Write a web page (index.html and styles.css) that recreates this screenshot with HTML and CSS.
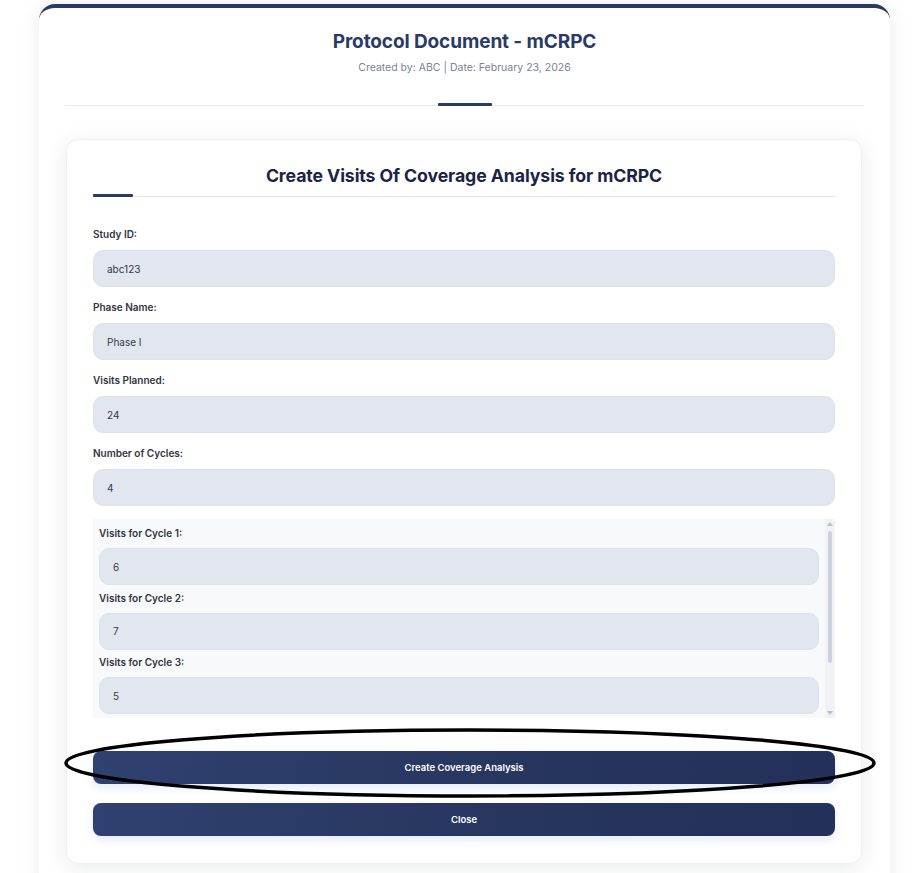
FILE: index.html
```html
<!DOCTYPE html>
<html lang="en">
<head>
<meta charset="utf-8">
<title>Protocol Document - mCRPC</title>
<link rel="stylesheet" href="styles.css">
</head>
<body>
<div class="page">
  <div class="outer">
    <header class="header">
      <h1 class="title">Protocol Document - mCRPC</h1>
      <p class="subtitle">Created by: ABC | Date: February 23, 2026</p>
      <div class="divider"><span class="divider-bar"></span></div>
    </header>

    <section class="card">
      <h2 class="card-title">Create Visits Of Coverage Analysis for mCRPC</h2>
      <div class="underline"><span class="underline-bar"></span></div>

      <div class="form">
        <div class="field">
          <label class="label">Study ID:</label>
          <div class="input">abc123</div>
        </div>
        <div class="field">
          <label class="label">Phase Name:</label>
          <div class="input">Phase I</div>
        </div>
        <div class="field">
          <label class="label">Visits Planned:</label>
          <div class="input">24</div>
        </div>
        <div class="field">
          <label class="label">Number of Cycles:</label>
          <div class="input">4</div>
        </div>

        <div class="cycles">
          <div class="cycle-list">
            <div class="cycle">
              <label class="label">Visits for Cycle 1:</label>
              <div class="input">6</div>
            </div>
            <div class="cycle">
              <label class="label">Visits for Cycle 2:</label>
              <div class="input">7</div>
            </div>
            <div class="cycle">
              <label class="label">Visits for Cycle 3:</label>
              <div class="input">5</div>
            </div>
          </div>
          <div class="scrollbar" aria-hidden="true">
            <span class="arrow-up"></span>
            <span class="thumb"></span>
            <span class="track-rest"></span>
            <span class="arrow-down"></span>
          </div>
        </div>
      </div>

      <div class="actions">
        <button class="btn">Create Coverage Analysis</button>
        <button class="btn">Close</button>
      </div>
    </section>
  </div>

  <svg class="annotation" width="916" height="873" viewBox="0 0 916 873" aria-hidden="true">
    <ellipse cx="470" cy="763" rx="404" ry="33" fill="none" stroke="#000" stroke-width="3.5"/>
  </svg>
</div>
</body>
</html>
```

FILE: styles.css
```css
* { box-sizing: border-box; }

html, body {
  margin: 0;
  padding: 0;
  background: #ffffff;
  font-family: Inter, "Noto Sans", "Liberation Sans", sans-serif;
  overflow: hidden;
}

.page {
  position: relative;
  padding: 4px 0 0 39px;
  height: 873px;
}

.outer {
  width: 851px;
  background: #ffffff;
  border-top: 4px solid #2a3a68;
  border-radius: 16px;
  box-shadow: 0 2px 22px rgba(20, 30, 60, 0.08);
  padding: 0 26px 30px;
}

.header {
  text-align: center;
  padding-top: 22px;
}

.title {
  margin: 0;
  font-size: 19px;
  line-height: 24px;
  font-weight: 700;
  color: #2a3a68;
  letter-spacing: -0.1px;
}

.subtitle {
  margin: 7px 0 0;
  font-size: 10.5px;
  line-height: 14px;
  color: #7a8395;
  font-weight: 400;
}

.divider {
  margin-top: 28px;
  height: 3px;
  display: flex;
  justify-content: center;
  background: linear-gradient(#e8e9ef, #e8e9ef) left bottom / 100% 1px no-repeat;
}

.divider-bar {
  width: 54px;
  background: #2a3a68;
  border-radius: 1px;
}

.card {
  margin: 33px 2px 0 1px;
  background: #ffffff;
  border: 1px solid #eef0f4;
  border-radius: 12px;
  box-shadow: 0 4px 22px rgba(20, 30, 60, 0.09);
  padding: 25px 26px 27px 26px;
}

.card-title {
  margin: 0;
  text-align: center;
  font-size: 17.7px;
  line-height: 22px;
  font-weight: 700;
  color: #1b2446;
  letter-spacing: -0.1px;
}

.underline {
  margin-top: 7px;
  height: 3px;
  display: flex;
  background: linear-gradient(#e3e5ec, #e3e5ec) left bottom / 100% 1px no-repeat;
}

.underline-bar {
  width: 40px;
  background: #2a3a68;
  border-radius: 1px;
}

.form {
  margin-top: 30px;
  display: flex;
  flex-direction: column;
  gap: 13px;
}

.field {
  display: flex;
  flex-direction: column;
  gap: 9px;
}

.label {
  font-size: 10px;
  line-height: 14px;
  font-weight: 600;
  color: #2f3441;
}

.input {
  height: 37px;
  background: #e2e6ee;
  border: 1px solid #dde1e9;
  border-radius: 10px;
  padding: 0 13px;
  display: flex;
  align-items: center;
  font-size: 10px;
  color: #333a47;
}

.cycles {
  height: 199px;
  display: flex;
  background: #f8f9fb;
}

.cycle-list {
  flex: 1;
  min-width: 0;
  padding: 7px 6px 0 6px;
  display: flex;
  flex-direction: column;
  overflow: hidden;
}

.cycle {
  display: flex;
  flex-direction: column;
  gap: 8px;
  padding-bottom: 5.5px;
  flex: none;
}

.scrollbar {
  width: 10px;
  flex: none;
  background: #f0f2f6;
  display: flex;
  flex-direction: column;
  align-items: center;
  padding: 3px 0 3px;
}

.arrow-up {
  width: 0;
  height: 0;
  border-left: 3px solid transparent;
  border-right: 3px solid transparent;
  border-bottom: 4px solid #b8bfcb;
}

.arrow-down {
  width: 0;
  height: 0;
  border-left: 3px solid transparent;
  border-right: 3px solid transparent;
  border-top: 4px solid #b8bfcb;
}

.thumb {
  margin-top: 5px;
  width: 4px;
  height: 132px;
  background: #cbd2dd;
  border-radius: 2px;
}

.track-rest {
  flex: 1;
}

.actions {
  margin-top: 33px;
  display: flex;
  flex-direction: column;
  gap: 19px;
}

.btn {
  height: 33px;
  width: 100%;
  border: none;
  border-radius: 8px;
  background: linear-gradient(100deg, #2f4170 0%, #27365f 55%, #22305a 100%);
  color: #ffffff;
  font-family: Inter, "Noto Sans", "Liberation Sans", sans-serif;
  font-size: 9.5px;
  font-weight: 600;
  box-shadow: 0 4px 10px rgba(60, 80, 200, 0.12);
}

.annotation {
  position: absolute;
  left: 0;
  top: 0;
  pointer-events: none;
}
```
